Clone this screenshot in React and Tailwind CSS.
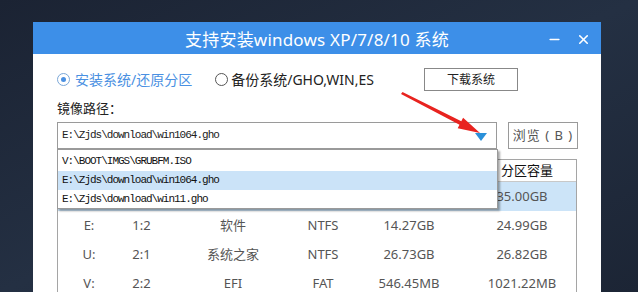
import { Minus, X } from 'lucide-react';

const cjk = { fontFamily: '"Noto Sans", "Noto Sans CJK SC", sans-serif' };
const mono = { fontFamily: '"Liberation Mono", "Noto Sans CJK SC", monospace' };

// first row sits under the open dropdown, only its last cell shows
const rows = [
  ['', '', '', '', '', '35.00GB'],
  ['E:', '1:2', '软件', 'NTFS', '14.27GB', '24.99GB'],
  ['U:', '2:1', '系统之家', 'NTFS', '26.73GB', '26.82GB'],
  ['V:', '2:2', 'EFI', 'FAT', '546.45MB', '1021.22MB'],
];

const paths = [
  'V:\\BOOT\\IMGS\\GRUBFM.ISO',
  'E:\\Zjds\\download\\win1064.gho',
  'E:\\Zjds\\download\\win11.gho',
];

const cols = 'grid grid-cols-[62px_43px_140px_40px_132px_94px_1fr]';

const App = () => {
  return (
    <div
      className="relative w-[638px] h-[292px] overflow-hidden bg-gradient-to-br from-[#1b2333] via-[#243043] to-[#1c2535] pt-[22px] pl-[33px]"
      style={cjk}
    >
      <div className="w-[568px] h-[300px] bg-white">
        {/* Title bar */}
        <div className="relative h-[32px] bg-[#3d8fe8] flex items-center justify-center text-white">
          <span className="text-[17px] tracking-[0.2px] mt-[3px]">支持安装windows XP/7/8/10 系统</span>
          <div className="absolute right-[10px] top-[10px] flex items-center gap-[14px]">
            <Minus size={15} strokeWidth={2.5} />
            <X size={15} strokeWidth={2.5} />
          </div>
        </div>

        <div className="pl-[24px] pr-[23px]">
          {/* Mode row */}
          <div className="flex items-center h-[23px] mt-[14px]">
            <div className="flex items-center gap-[5px] text-[#4a90e2] text-[14px]">
              <span className="w-[13px] h-[13px] rounded-full border border-[#7aa7d8] flex items-center justify-center">
                <span className="w-[5px] h-[5px] rounded-full bg-[#4a90e2]" />
              </span>
              安装系统/还原分区
            </div>
            <div className="flex items-center gap-[3px] text-[#222] text-[14px] ml-[23px]">
              <span className="w-[13px] h-[13px] rounded-full border border-[#555]" />
              备份系统/GHO,WIN,ES
            </div>
            <button className="ml-[50px] w-[94px] h-[23px] border border-[#888] text-[12px] text-[#222] bg-white">
              下载系统
            </button>
          </div>

          <div className="mt-[9px] text-[13px] text-[#222] leading-[16px]">镜像路径：</div>

          {/* Path row */}
          <div className="flex gap-[11px] mt-[6px]">
            <div className="relative w-[440px] h-[27px] border border-[#9a9a9a] flex items-center pl-[4px] pr-[8px]">
              <span className="text-[11px] tracking-[-1px] text-[#222]" style={mono}>
                E:\Zjds\download\win1064.gho
              </span>
              <span className="ml-auto w-0 h-0 border-l-[6px] border-r-[6px] border-t-[8px] border-l-transparent border-r-transparent border-t-[#2a90d9] mt-[2px] mr-[1px]" />

              {/* Dropdown list */}
              <div className="absolute left-[-1px] top-[26px] w-[441px] h-[60px] bg-white border border-[#9a9a9a] shadow-[2px_2px_2px_rgba(0,0,0,0.35)] z-10 pt-[2px]">
                {paths.map((p, i) => (
                  <div
                    key={p}
                    className={`h-[19px] flex items-center pl-[4px] text-[11px] tracking-[-1px] text-[#111] ${i === 1 ? 'bg-[#cbe3f8]' : ''}`}
                    style={mono}
                  >
                    {p}
                  </div>
                ))}
              </div>
            </div>
            <button className="w-[70px] h-[27px] border border-[#9a9a9a] text-[13px] text-[#555] tracking-[1px] bg-white">
              浏览 ( B )
            </button>
          </div>

          {/* Partition table */}
          <div className="mt-[10px] w-[520px] border border-[#a5a5a5] text-[13px] text-[#555]">
            <div className={`${cols} h-[22px] items-center text-[#111] border-b border-[#c8c8c8]`}>
              <div className="col-start-6 pl-[26px]">分区容量</div>
            </div>
            {rows.map((r, i) => (
              <div key={i} className={`${cols} h-[29px] items-center ${i === 0 ? 'bg-[#cce4f8]' : ''}`}>
                {r.map((c, j) => (
                  <div key={j} className="text-center">{c}</div>
                ))}
                <div />
              </div>
            ))}
          </div>
        </div>
      </div>

      {/* Red arrow */}
      <svg className="absolute left-[395px] top-[88px]" width="100" height="55" viewBox="0 0 100 55">
        <polygon
          points="6,6 7.5,4 66.3,33.2 68.1,29.7 85,45 62.7,40.3 64.5,36.8"
          fill="#e8231f"
        />
      </svg>
    </div>
  );
};

export default App;
